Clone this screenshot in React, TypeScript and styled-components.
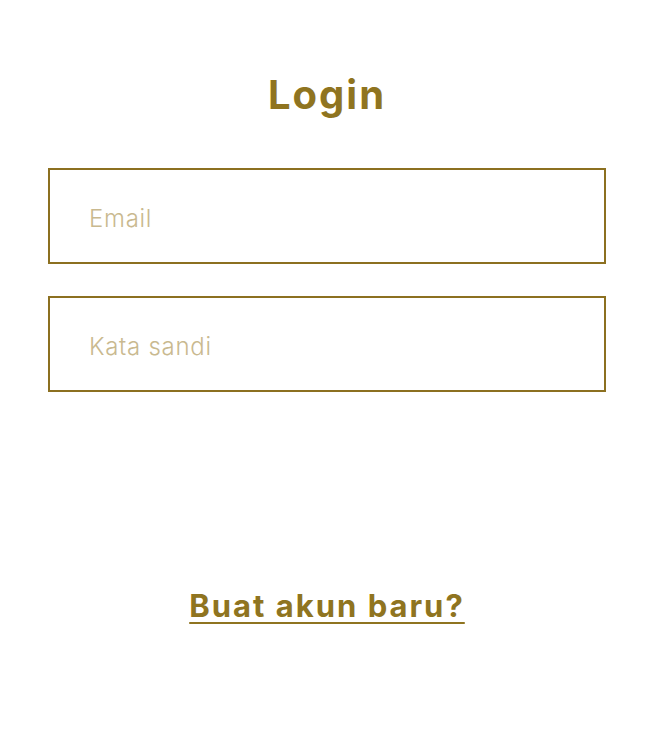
import React from "react";
import styled, { createGlobalStyle } from "styled-components";

const Global = createGlobalStyle`
  html, body { margin: 0; padding: 0; background: #ffffff; }
  body { font-family: Inter, "Open Sans", sans-serif; }
`;

const Page = styled.main`
  display: flex;
  flex-direction: column;
  align-items: stretch;
  padding: 70px 48px 0;
`;

const Title = styled.h1`
  margin: 0 0 48px;
  text-align: center;
  font-family: Inter, sans-serif;
  font-weight: 700;
  font-size: 40px;
  line-height: 50px;
  letter-spacing: 2px;
  color: #8f7420;
`;

const Form = styled.form`
  display: flex;
  flex-direction: column;
  gap: 32px;
`;

const Field = styled.input`
  box-sizing: border-box;
  width: 100%;
  height: 96px;
  border: 2px solid #8c7020;
  border-radius: 0;
  padding: 4px 0 0 39px;
  font-family: Inter, sans-serif;
  font-weight: 300;
  font-size: 24px;
  letter-spacing: 0.7px;
  color: #8f7420;
  background: #fff;
  outline: none;
  &::placeholder { color: #c9b98f; }
`;

const LinkRow = styled.div`
  display: flex;
  justify-content: center;
  margin-top: 194px;
`;

const CreateLink = styled.a`
  font-family: Inter, sans-serif;
  font-weight: 700;
  font-size: 31px;
  line-height: 40px;
  letter-spacing: 2px;
  color: #8f7420;
  text-decoration: underline;
  text-underline-offset: 5px;
  text-decoration-thickness: 2px;
  cursor: pointer;
`;

export default function App() {
  return (
    <>
      <Global />
      <Page>
        <Title>Login</Title>
        <Form onSubmit={(e) => e.preventDefault()}>
          <Field type="email" placeholder="Email" />
          <Field type="password" placeholder="Kata sandi" />
        </Form>
        <LinkRow>
          <CreateLink href="#">Buat akun baru?</CreateLink>
        </LinkRow>
      </Page>
    </>
  );
}
